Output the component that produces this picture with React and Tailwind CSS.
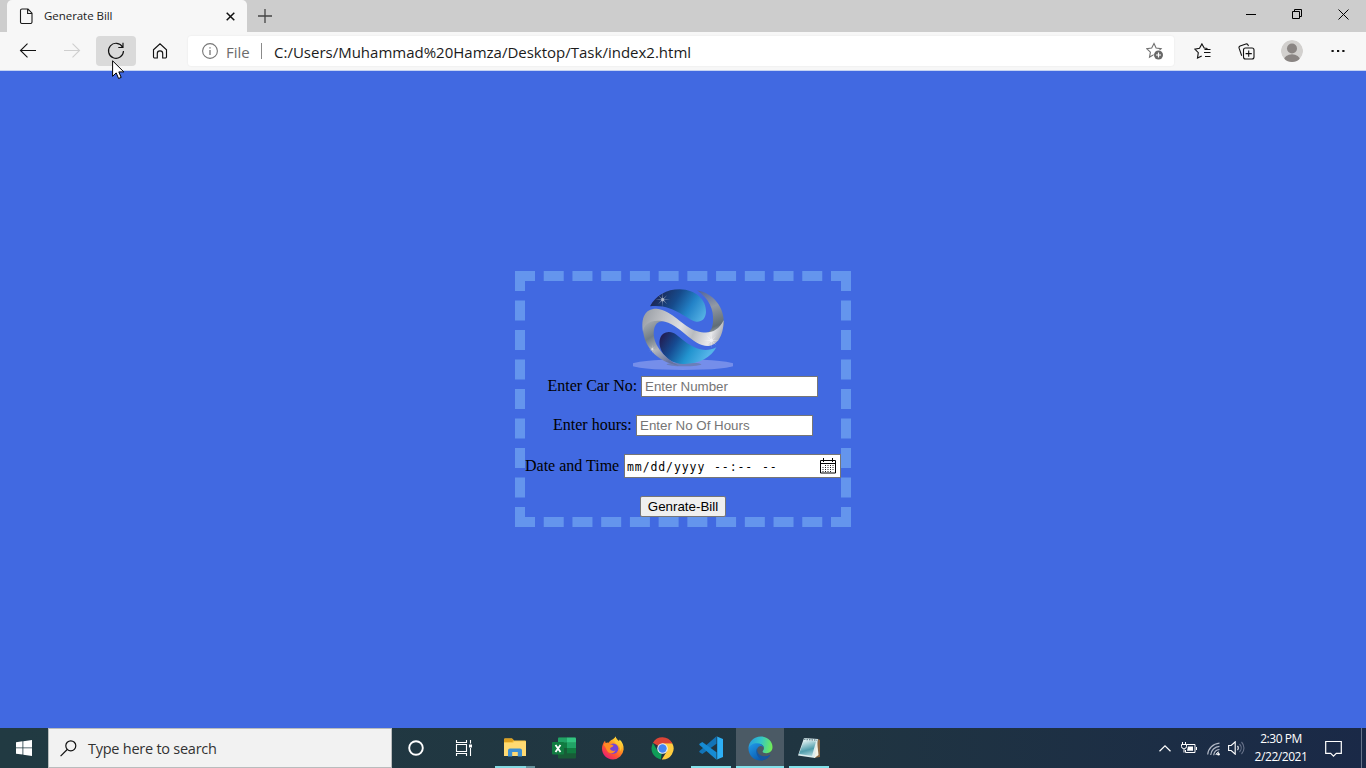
import React from "react";

function Svg({ w, h, children, className = "", vb }) {
  return (
    <svg width={w} height={h} viewBox={vb || `0 0 ${w} ${h}`} fill="none" className={`block shrink-0 ${className}`}>
      {children}
    </svg>
  );
}

function Cell({ className, children }) {
  return <div className={`flex shrink-0 items-center justify-center ${className}`}>{children}</div>;
}

function TitleBar() {
  return (
    <div className="flex h-8 items-end bg-[#cdcdcd]">
      <div className="ml-[7px] flex h-8 w-60 items-center rounded-t-[5px] bg-[#f7f7f7] pl-3">
        <Svg w={14} h={16}>
          <path d="M1.500 2.500a1.500 1.500 0 0 1 1.500-1.500h6l4 4.200v8.800a1.500 1.500 0 0 1-1.500 1.500h-8.500a1.500 1.500 0 0 1-1.500-1.500zM8.600 1v4.500h4.400" stroke="#1a1a1a" strokeWidth="1.100" />
        </Svg>
        <span className="ml-[11px] w-[182px] whitespace-nowrap font-['Open_Sans',sans-serif] text-[11.5px] leading-4 tracking-[-0.05px] text-[#1b1b1b]">Generate Bill</span>
        <Svg w={9} h={9}>
          <path d="M.7.7l7.600 7.600M8.300.7L.7 8.300" stroke="#111" strokeWidth="1.500" />
        </Svg>
      </div>
      <Cell className="h-8 w-9">
        <Svg w={14} h={14}>
          <path d="M7 0v14M0 7h14" stroke="#444" strokeWidth="1.300" />
        </Svg>
      </Cell>
      <div className="ml-auto flex h-8 items-center pb-1">
        <Cell className="w-[46px]">
          <Svg w={10} h={10}>
            <path d="M0 5.500h10" stroke="#000" />
          </Svg>
        </Cell>
        <Cell className="w-[46px]">
          <Svg w={10} h={10}>
            <path d="M.5 2.500h7v7h-7zM2.500 2v-1.500h7v7h-1.500" stroke="#000" />
          </Svg>
        </Cell>
        <Cell className="w-[46px]">
          <Svg w={11} h={11}>
            <path d="M.5.5l10 10M10.500.5l-10 10" stroke="#000" />
          </Svg>
        </Cell>
      </div>
    </div>
  );
}

function Toolbar() {
  return (
    <div className="flex h-[39px] items-center border-b border-[#c5d3f3] bg-[#f7f7f7]">
      <Cell className="ml-2 w-10">
        <Svg w={18} h={16}>
          <path d="M17 7.500H1.500M8.500.7L1.500 7.500l7 6.800" stroke="#111" strokeWidth="1.100" />
        </Svg>
      </Cell>
      <Cell className="ml-1 w-10">
        <Svg w={18} h={16}>
          <path d="M1 7.500h15.500M9.500.7l7 6.800-7 6.800" stroke="#cfcfcf" strokeWidth="1.100" />
        </Svg>
      </Cell>
      <Cell className="ml-1 h-[30px] w-10 rounded-sm bg-[#dadada]">
        <Svg w={18} h={18}>
          <path d="M15.600 5.200A7.500 7.500 0 1 0 16.500 9M16 .8v4.700h-4.700" stroke="#111" strokeWidth="1.150" />
        </Svg>
      </Cell>
      <Cell className="ml-1 w-10">
        <Svg w={16} h={16}>
          <path d="M1.500 6.800L8 .9l6.500 5.900v7a1.200 1.200 0 0 1-1.200 1.200h-2.600v-4.500a2.700 2.700 0 0 0-5.400 0v4.500H2.700a1.200 1.200 0 0 1-1.200-1.200z" stroke="#111" strokeWidth="1.150" />
        </Svg>
      </Cell>
      <div className="ml-2 flex h-[30px] w-[986px] items-center rounded-[3px] bg-white pl-3.5 shadow-[0_0_2px_rgba(0,0,0,0.08)]">
        <Svg w={16} h={16}>
          <circle cx="8" cy="8" r="7.400" stroke="#767676" strokeWidth="1.100" />
          <path d="M8 7v5M8 4.200v1.400" stroke="#767676" strokeWidth="1.300" />
        </Svg>
        <span className="ml-2 w-[27px] whitespace-nowrap pt-0.5 font-['Open_Sans',sans-serif] text-[15px] leading-5 text-[#6c6c6c]">File</span>
        <div className="ml-2 h-4 w-px bg-[#8a8a8a]" />
        <span className="ml-3 whitespace-nowrap pt-0.5 font-['Open_Sans',sans-serif] text-[15px] leading-5 text-[#1b1b1b]">C:/Users/Muhammad%20Hamza/Desktop/Task/index2.html</span>
        <Svg w={18} h={18} className="ml-auto mr-[10px]">
          <path d="M8 1.500l2.100 4.600 5 .6-3.600 3.400.9 5L8 12.600l-4.500 2.500.9-5L.7 6.700l5-.6z" stroke="#707070" strokeWidth="1.100" />
          <circle cx="12.500" cy="13" r="5" fill="#fff" />
          <circle cx="12.500" cy="13" r="4.500" fill="#686868" />
          <path d="M12.500 10.500v5M10 13h5" stroke="#fff" strokeWidth="1.200" />
        </Svg>
      </div>
      <Cell className="ml-2 w-10">
        <Svg w={17} h={17}>
          <path d="M13.500 5.500l-3.300-.4L7.900.9 5.500 5.300l-4.700.8 3.500 3.500-.8 5.500 4.200-2.200" stroke="#111" strokeWidth="1.100" />
          <path d="M10.500 6.500h6M10 9.500h6.500M11 13.500h5.500" stroke="#111" strokeWidth="1.100" />
        </Svg>
      </Cell>
      <Cell className="ml-1 w-10">
        <Svg w={17} h={17}>
          <path d="M3.700 12.700L1.100 5.200a1.800 1.800 0 0 1 1-2.200l5.800-2a1.800 1.800 0 0 1 2.200 1.200l.3 1" stroke="#111" strokeWidth="1.100" />
          <rect x="5.500" y="5" width="10.500" height="11" rx="2" stroke="#111" strokeWidth="1.100" />
          <path d="M10.700 7.500v6.200M7.600 10.600h6.200" stroke="#111" strokeWidth="1.100" />
        </Svg>
      </Cell>
      <Cell className="ml-[6px] w-10">
        <Svg w={22} h={22} className="rounded-full">
          <circle cx="11" cy="11" r="11" fill="#d2d0ce" />
          <circle cx="11" cy="8.500" r="5" fill="#8a8583" />
          <ellipse cx="11" cy="20" rx="8" ry="5.700" fill="#8a8583" />
        </Svg>
      </Cell>
      <Cell className="ml-[6px] w-10">
        <Svg w={14} h={4}>
          <path d="M.5 1h2.200v2H.5zM6 1h2.200v2H6zM11.300 1h2.200v2h-2.200z" fill="#111" />
        </Svg>
      </Cell>
    </div>
  );
}

function Sparkle({ x, y, s }) {
  return (
    <g transform={`translate(${x} ${y}) scale(${s})`}>
      <circle r="5" fill="#fff" opacity=".4" />
      <path d="M0-22L1.500 0 0 22-1.500 0zM-22 0L0-1.500 22 0 0 1.500zM-14-14L1-1 14 14-1 1zM14-14L1 1-14 14-1-1z" fill="#fff" opacity=".45" />
    </g>
  );
}

function Logo() {
  return (
    <Svg w={110} h={92} vb="0 0 330 276">
      <defs>
        <linearGradient id="top" x1="90" y1="35" x2="225" y2="120" gradientUnits="userSpaceOnUse">
          <stop stopColor="#1c2858" /><stop offset=".35" stopColor="#164b8c" /><stop offset=".65" stopColor="#2383c8" /><stop offset="1" stopColor="#59b5e6" />
        </linearGradient>
        <linearGradient id="bottom" x1="105" y1="158" x2="230" y2="235" gradientUnits="userSpaceOnUse">
          <stop stopColor="#211f55" /><stop offset=".3" stopColor="#164a91" /><stop offset=".65" stopColor="#2294cf" /><stop offset="1" stopColor="#55b4e8" />
        </linearGradient>
        <linearGradient id="band" x1="46" y1="90" x2="280" y2="180" gradientUnits="userSpaceOnUse">
          <stop stopColor="#989da4" /><stop offset=".25" stopColor="#bfc1c5" /><stop offset=".48" stopColor="#dddee2" /><stop offset=".65" stopColor="#b8bbbf" /><stop offset=".85" stopColor="#e8e8eb" /><stop offset="1" stopColor="#9da1a8" />
        </linearGradient>
        <linearGradient id="left" x1="50" y1="120" x2="120" y2="240" gradientUnits="userSpaceOnUse">
          <stop stopColor="#a8adb3" /><stop offset=".35" stopColor="#727e86" /><stop offset=".65" stopColor="#b1b4ba" /><stop offset="1" stopColor="#6673a0" />
        </linearGradient>
        <linearGradient id="right" x1="220" y1="25" x2="270" y2="160" gradientUnits="userSpaceOnUse">
          <stop stopColor="#53669f" /><stop offset=".4" stopColor="#9299a4" /><stop offset=".8" stopColor="#606d76" /><stop offset="1" stopColor="#b5b9bd" />
        </linearGradient>
        <clipPath id="frame"><rect x="15" y="0" width="300" height="270" /></clipPath>
      </defs>
      <ellipse cx="165" cy="248" rx="156" ry="16" fill="#758eea" clipPath="url(#frame)" />
      <ellipse cx="168" cy="247" rx="52" ry="6" fill="#697bac" opacity=".8" />
      <path d="M66 73C84 40 115 22 155 22c50 1 80 33 79 67-1 20-12 31-29 30C172 112 137 64 66 73z" fill="url(#top)" />
      <path d="M122 150c-24 1-32 24-25 47 8 28 37 49 71 49 47 0 82-21 97-50-32 16-64 6-95-18-20-16-32-29-48-28z" fill="url(#bottom)" />
      <path d="M207 25c36 25 51 57 48 95-2 20-8 31-20 33 28 8 49-2 52-28 3-49-31-91-80-100z" fill="url(#right)" />
      <path d="M45 130c-3 58 38 110 108 121-50-26-82-70-75-108 3-17 12-25 27-25C70 103 50 108 45 130z" fill="url(#left)" />
      <path d="M45 150C38 107 51 79 86 80c46 4 78 54 120 67 35 11 63 4 81-32 0 36-13 75-46 77-49 1-84-67-140-75-33-4-54 8-56 33z" fill="url(#band)" />
      <Sparkle x={104} y={53} s={1} />
      <Sparkle x={73} y={201} s={0.65} />
      <Sparkle x={250} y={175} s={1.1} />
    </Svg>
  );
}

function Label({ children, className }) {
  return <span className={`shrink-0 whitespace-nowrap font-['Liberation_Serif',serif] text-[16px] leading-[18px] text-black ${className}`}>{children}</span>;
}

const dots = [];
for (let r = 0; r < 4; r++) for (let c = 0; c < 5; c++) if (!(r === 3 && c === 4) && !(r === 0 && c === 0)) dots.push([3 + c * 2.5, 7 + r * 2]);

function Page() {
  return (
    <div className="flex h-[657px] justify-center bg-[#4169e1]">
      <div className="mt-[200px] flex h-[256px] w-[336px] flex-col items-center border-[10px] border-dashed border-[#6495ed]">
        <div className="mt-px"><Logo /></div>
        <div className="mt-[2px] flex h-[21px] w-[271px] items-center pl-0">
          <Label className="mb-0.5 w-[93.500px]">Enter Car No:</Label>
          <div className="flex h-[21px] w-[177px] items-center border border-[#767676] bg-white pl-[3px] font-['Liberation_Sans',sans-serif] text-[13.33px] leading-[15px] text-[#757575]">Enter Number</div>
        </div>
        <div className="mt-[18px] flex h-[21px] w-[260px] items-center justify-between">
          <Label className="mb-0.5">Enter hours:</Label>
          <div className="flex h-[21px] w-[177px] items-center border border-[#767676] bg-white pl-[3px] font-['Liberation_Sans',sans-serif] text-[13.33px] leading-[15px] text-[#757575]">Enter No Of Hours</div>
        </div>
        <div className="mt-[18px] flex h-6 w-full items-center justify-between">
          <Label>Date and Time</Label>
          <div className="flex h-6 w-[217px] items-center justify-between border border-[#767676] bg-white pl-[2px] pr-1">
            <span className="flex whitespace-pre pt-0.5 font-['DejaVu_Sans_Mono',monospace] text-[11.5px] leading-4 text-black">
              <span className="w-[87px] tracking-[0.9px]">mm/dd/yyyy</span>
              <span className="w-12 tracking-[0.9px]">--:--</span>
              <span className="tracking-[0.9px]">--</span>
            </span>
            <Svg w={16} h={16} className="mb-px">
              <path d="M.5 2.500h15v12.500H.5zM.5 5.500h15M3.500 0v4M12.500 0v4" stroke="#000" />
              {dots.map(([x, y], i) => <rect key={i} x={x - 0.5} y={y} width="1" height="1" fill="#222" />)}
            </Svg>
          </div>
        </div>
        <div className="mt-[18px] flex h-[21px] w-[86px] shrink-0 items-center justify-center rounded-[2px] border border-[#767676] bg-[#efefef] font-['Liberation_Sans',sans-serif] text-[13.33px] leading-[15px] text-black">Genrate-Bill</div>
      </div>
    </div>
  );
}

function Folder() {
  return (
    <Svg w={22} h={20}>
      <path d="M0 1.500A1 1 0 0 1 1 .5h7l2 2h11a1 1 0 0 1 1 1V18H0z" fill="#f8c94c" />
      <path d="M0 1.500A1 1 0 0 1 1 .5h7l2 2-2 1.500H0z" fill="#dc9f20" />
      <path d="M0 5h9l1.500-1.500H22V18H0z" fill="#ffda72" />
      <path d="M4 18.500v-6a2 2 0 0 1 2-2h10a2 2 0 0 1 2 2v6h-4.200V14H8.200v4.500z" fill="#3d8fd2" />
    </Svg>
  );
}

function Excel() {
  return (
    <Svg w={24} h={22}>
      <rect x="6" y=".5" width="18" height="21" rx="1" fill="#185c37" />
      <path d="M6 1.500a1 1 0 0 1 1-1h8v5.300H6z" fill="#21a366" />
      <path d="M15 .5h8a1 1 0 0 1 1 1v4.300h-9z" fill="#33c481" />
      <path d="M6 5.800h9V11H6z" fill="#107c41" />
      <path d="M15 5.800h9V11h-9z" fill="#21a366" />
      <path d="M15 11h9v5.300h-9z" fill="#107c41" />
      <rect x="0" y="5" width="12" height="12.500" rx="1" fill="#107c41" />
      <path d="M3.500 8l5 7M8.500 8l-5 7" stroke="#fff" strokeWidth="1.800" />
    </Svg>
  );
}

function Firefox() {
  return (
    <Svg w={24} h={24}>
      <defs>
        <linearGradient id="fx" x1="20" y1="3" x2="5" y2="22" gradientUnits="userSpaceOnUse">
          <stop stopColor="#fff04a" /><stop offset=".35" stopColor="#ff9a20" /><stop offset=".65" stopColor="#ff5630" /><stop offset="1" stopColor="#e91c75" />
        </linearGradient>
      </defs>
      <path d="M14.500.5c.5 2.500 2 3.300 3.500 4.800l.6-1.700c2.800 2.500 4.300 5.900 4 10A10.900 10.900 0 0 1 12 23.500C5.500 23.500 1 18.500 1 12.600c0-3.300 1.300-5.900 3-7.900l.7 2.400c1-.6 2-.7 3.100-.4C9 3.700 12.700 4.100 14.500.5z" fill="url(#fx)" />
      <circle cx="12.200" cy="12.600" r="5.200" fill="#7544d6" />
      <path d="M2.500 9c2-3 5-2 6.500-.5 1.500.1 2.800.4 3.600 1.300-1.300 1.800-3.200 1.300-3.700 3.300 1.500 2 3.600 2.500 5.700 1.500-1 2-3.200 3.300-5.700 2.500C5 15.700 5 10.500 2.500 9z" fill="#ff8c25" />
      <path d="M14.500.5c.5 2.500 2 3.300 3.500 4.800 3 3.500 3.200 7.200 1.300 10.200.2-4-1.100-5.700-3.500-7.500-2-1.500-3.300-4-1.300-7.500z" fill="#ffc832" />
    </Svg>
  );
}

function Chrome() {
  return (
    <Svg w={23} h={23} vb="0 0 48 48">
      <path d="M24 24L4.100 12A23 23 0 0 1 44 12.500z" fill="#db4437" />
      <path d="M24 24L20.500 46.700A23 23 0 0 1 4.100 12.500L14 29z" fill="#0f9d58" />
      <path d="M24 13h20.300A23 23 0 0 1 22.500 47l11-18z" fill="#ffcd40" />
      <path d="M24 13h20.300L43 10.500 24 7z" fill="#db4437" />
      <circle cx="24" cy="24" r="11" fill="#f1f1f1" />
      <circle cx="24" cy="24" r="8.800" fill="#4285f4" />
    </Svg>
  );
}

function VsCode() {
  return (
    <Svg w={24} h={24}>
      <path d="M17.500.3v7.500L3.300 18 .5 16.200c-.4-.4-.4-.8 0-1.200z" fill="#1274b8" />
      <path d="M17.500 23.700v-7.500L3.300 6 .5 7.800c-.4.400-.4.800 0 1.200z" fill="#168bd3" />
      <path d="M17.300.2L24 3.100v17.800l-6.700 2.900c.6-.2.900-.7.900-1.300v-21c0-.6-.3-1.100-.9-1.300z" fill="#2daff5" />
    </Svg>
  );
}

function Edge() {
  return (
    <Svg w={25} h={25}>
      <defs>
        <linearGradient id="ea" x1="1" y1="5" x2="24" y2="10" gradientUnits="userSpaceOnUse">
          <stop stopColor="#269de0" /><stop offset=".5" stopColor="#34c6c5" /><stop offset="1" stopColor="#70ec58" />
        </linearGradient>
        <linearGradient id="eb" x1="2" y1="8" x2="14" y2="25" gradientUnits="userSpaceOnUse">
          <stop stopColor="#2096e5" /><stop offset="1" stopColor="#0754a8" />
        </linearGradient>
      </defs>
      <path d="M.5 12.500C.5 5.500 6 .5 12.700.5S24.500 5.500 24.500 11c0 4-2.800 6.200-6.200 6.200-2.800 0-4.500-1.200-3.300-2.500 2.200-2.700.4-6.700-4-6.700C5.500 8 2 10 .5 12.500z" fill="url(#ea)" />
      <path d="M.5 12.500C1.500 9.200 5 7.200 9 7.200c3.500 0 6 1.800 6.800 4.300-1-1-2-1.500-3.300-1.500-3 .5-4.500 4-3 7 1.900 4 7.500 5 13 1.800-2 3.500-5.700 5.700-10 5.700C5.500 24.500.5 19 .5 12.500z" fill="url(#eb)" />
      <path d="M9.300 11.800c-2 3.200-1.300 8.700 5 12.500 3.500-.5 6.500-2.500 8.200-5.500-4.500 2.500-9.500 2-12-1-1.300-1.700-1.700-4-1.200-6z" fill="#1756a0" />
    </Svg>
  );
}

function Notepad() {
  return (
    <Svg w={24} h={22}>
      <defs>
        <linearGradient id="note" x1="7" y1="3" x2="12" y2="20" gradientUnits="userSpaceOnUse">
          <stop stopColor="#e6f5f5" /><stop offset=".6" stopColor="#4f9cab" /><stop offset="1" stopColor="#b0d7de" />
        </linearGradient>
      </defs>
      <path d="M21 2l2 1v17l-6 1z" fill="#8c6845" />
      <path d="M7 1l14 1-3 19L1 18.500z" fill="#dcecee" />
      <path d="M7 3l12 1.500L15 19 2 17z" fill="url(#note)" />
      <path d="M20 4l1.500 14-4 3z" fill="#f5f3e8" />
      <path d="M7 2.200l13 1" stroke="#718f98" strokeWidth="1.500" strokeDasharray="1.500 1" />
    </Svg>
  );
}

function TaskButton({ children, bar = "bg-transparent w-10", className = "ml-px w-12" }) {
  return (
    <div className={`flex h-10 shrink-0 flex-col items-center ${className}`}>
      <div className="flex h-[38px] items-center pt-0.5">{children}</div>
      <div className={`h-0.5 ${bar}`} />
    </div>
  );
}

function Taskbar() {
  return (
    <div className="flex h-10 items-center bg-linear-to-r from-[#213a42] via-[#203541] via-60% to-[#1a2947]">
      <Cell className="h-10 w-12">
        <Svg w={16} h={16}>
          <path d="M0 2.200L6.500 1.300v6.200H0zM7.300 1.200L16 0v7.500H7.300zM0 8.300h6.500v6.200L0 13.700zM7.300 8.300H16V16l-8.700-1.300z" fill="#fff" />
        </Svg>
      </Cell>
      <div className="flex h-10 w-[344px] items-center border border-[#b9bcbd] bg-[#f2f2f2] pl-[11px]">
        <Svg w={17} h={17}>
          <circle cx="10.800" cy="5.800" r="5" stroke="#111" strokeWidth="1.200" />
          <path d="M7.200 9.500L.6 16.200" stroke="#111" strokeWidth="1.200" />
        </Svg>
        <span className="ml-[11px] whitespace-nowrap pt-0.5 font-['Open_Sans',sans-serif] text-[14.5px] leading-5 tracking-[-0.25px] text-[#323232]">Type here to search</span>
      </div>
      <Cell className="h-10 w-12">
        <Svg w={16} h={16}>
          <circle cx="8" cy="8" r="6.800" stroke="#fff" strokeWidth="1.900" />
        </Svg>
      </Cell>
      <Cell className="h-10 w-12 pr-0.5">
        <Svg w={17} h={16}>
          <path d="M1.500 0v2.500h10V0M1.500 16v-2.500h10V16M1.500 4.500h10v7h-10zM15.500 0v3.500M15.500 8v8" stroke="#fff" strokeWidth="1.100" />
          <path d="M14 4.500h3v3h-3z" fill="#fff" />
        </Svg>
      </Cell>
      <TaskButton className="ml-[3px] w-12" bar="w-10 border-r-[9px] border-[#65929c] bg-[#83d9e2]"><Folder /></TaskButton>
      <TaskButton><Excel /></TaskButton>
      <TaskButton><Firefox /></TaskButton>
      <TaskButton><Chrome /></TaskButton>
      <TaskButton bar="w-10 bg-[#83e1ea]"><VsCode /></TaskButton>
      <TaskButton className="ml-px w-12 bg-[#4b5a65]" bar="w-12 bg-[#83e1ea]"><Edge /></TaskButton>
      <TaskButton bar="w-10 bg-[#83e1ea]"><Notepad /></TaskButton>
      <div className="ml-auto flex h-10 items-center">
        <Cell className="w-6">
          <Svg w={12} h={7}><path d="M.5 6.300L6 .9l5.500 5.400" stroke="#fff" strokeWidth="1.200" /></Svg>
        </Cell>
        <Cell className="w-6">
          <Svg w={16} h={12}>
            <path d="M5.500 2.500h8.500v8H4.500V8M15.500 5v3M1.500 0v2.500M4.500 0v2.500M.5 2.500h5v2a2 2 0 0 1-2 2h-1a2 2 0 0 1-2-2zM3 6.500v4" stroke="#fff" />
            <path d="M7 4.500h5v4.200H6z" fill="#fff" />
          </Svg>
        </Cell>
        <Cell className="w-6 pl-0.5 pt-0.5">
          <Svg w={14} h={14}>
            <path d="M.7 12.500C1.200 6.500 6 1.700 12.500 1.200M3.700 13C4 8.300 7.800 4.600 12.500 4.300M6.700 13.300c.3-3.200 2.600-5.500 5.800-5.800" stroke="#b3bac7" strokeWidth="1.200" />
            <path d="M9 13c.2-1.500 1.400-2.800 3-3" stroke="#fff" />
            <circle cx="11.500" cy="12.300" r="1.300" fill="#fff" />
          </Svg>
        </Cell>
        <Cell className="w-[22px]">
          <Svg w={17} h={14}>
            <path d="M.6 4.500h2.600l4-3.700v12.400l-4-3.700H.6z" stroke="#fff" strokeWidth="1.100" />
            <path d="M9.500 5c1 1 1 3 0 4" stroke="#fff" strokeWidth="1.100" />
            <path d="M11.500 3c2.200 2.300 2.200 5.700 0 8M13.500 1c3.300 3.500 3.300 8.500 0 12" stroke="#68738a" strokeWidth="1.100" />
          </Svg>
        </Cell>
        <div className="flex w-[66px] shrink-0 flex-col items-center whitespace-nowrap pl-0.5 font-['Open_Sans',sans-serif] text-[12px] leading-[18px] tracking-[-0.45px] text-white">
          <span>2:30 PM</span>
          <span>2/22/2021</span>
        </div>
        <Cell className="ml-[7px] w-[26px]">
          <Svg w={17} h={17}><path d="M.7 1.500h15.600v11.800h-5l-2.800 2.800-2.800-2.800h-5z" stroke="#fff" strokeWidth="1.200" /></Svg>
        </Cell>
        <div className="ml-[15px] mr-1 h-10 w-px bg-[#67748a]" />
      </div>
    </div>
  );
}

export default function App() {
  return (
    <div className="relative h-[768px] w-[1366px] overflow-hidden">
      <TitleBar />
      <Toolbar />
      <Page />
      <Taskbar />
      <svg width="13" height="20" viewBox="0 0 13 20" className="absolute left-[112px] top-[60px]">
        <path d="M.6.8v15.500l3.600-3.400 2.400 5.600 2.600-1.100-2.400-5.500h5z" fill="#fff" stroke="#000" strokeWidth="1" />
      </svg>
    </div>
  );
}
